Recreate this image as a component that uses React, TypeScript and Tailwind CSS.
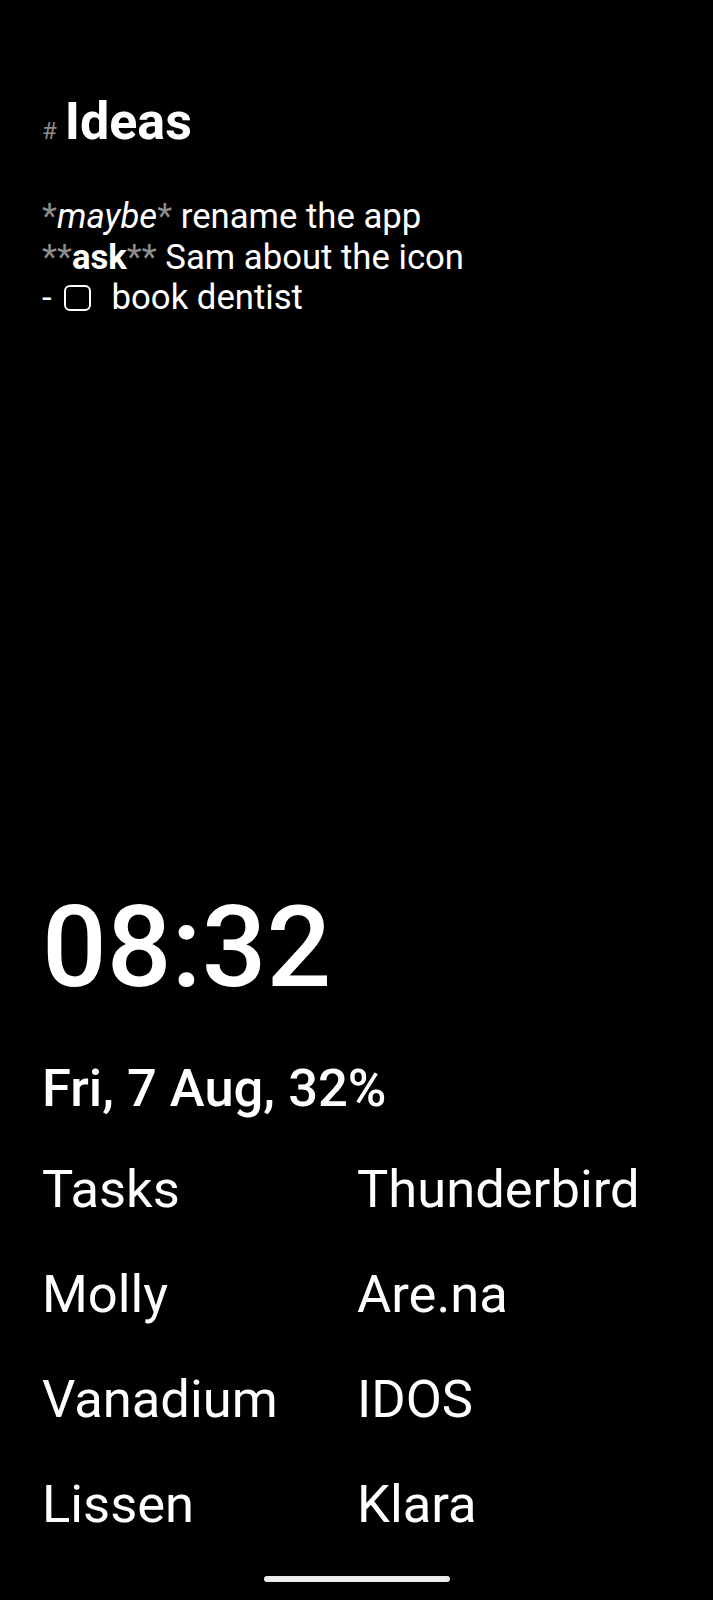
import React from "react";

const apps: [string, string][] = [
  ["Tasks", "Thunderbird"],
  ["Molly", "Are.na"],
  ["Vanadium", "IDOS"],
  ["Lissen", "Klara"],
];

export default function App() {
  return (
    <div
      className="relative h-[1600px] w-full overflow-hidden bg-black text-white"
      style={{ fontFamily: "Roboto, 'Noto Sans', sans-serif" }}
    >
      <div className="flex flex-col pl-[42px] pt-[91px]">
        <div className="flex items-baseline h-[62px] leading-[62px]">
          <span className="text-[24px] text-[#8c8c8c] mr-[8px]">#</span>
          <span className="text-[52px] font-bold">Ideas</span>
        </div>
        <div className="mt-[43px] text-[34.7px] leading-[40.5px]">
          <div>
            <span className="text-[#8c8c8c]">*</span>
            <span className="italic">maybe</span>
            <span className="text-[#8c8c8c]">*</span> rename the app
          </div>
          <div>
            <span className="text-[#8c8c8c]">**</span>
            <span className="font-bold">ask</span>
            <span className="text-[#8c8c8c]">**</span> Sam about the icon
          </div>
          <div className="flex items-baseline">
            <span>-</span>
            <span className="ml-[12px] inline-block h-[26px] w-[27px] translate-y-[2px] rounded-[6px] border-[2px] border-white"></span>
            <span className="ml-[21px]">book dentist</span>
          </div>
        </div>

        <div className="mt-[572px] text-[114px] leading-[114px] font-medium">
          08:32
        </div>
        <div className="mt-[53px] text-[52.5px] leading-[62px] font-medium">
          Fri, 7 Aug, 32%
        </div>
        <div className="mt-[18px] grid grid-cols-[315px_1fr] text-[52.5px] leading-[105px]">
          {apps.map(([a, b]) => (
            <React.Fragment key={a}>
              <div>{a}</div>
              <div>{b}</div>
            </React.Fragment>
          ))}
        </div>
      </div>
      <div className="mt-[19px] flex justify-center">
        <div className="h-[6px] w-[186px] rounded-full bg-[#ececec]"></div>
      </div>
    </div>
  );
}
